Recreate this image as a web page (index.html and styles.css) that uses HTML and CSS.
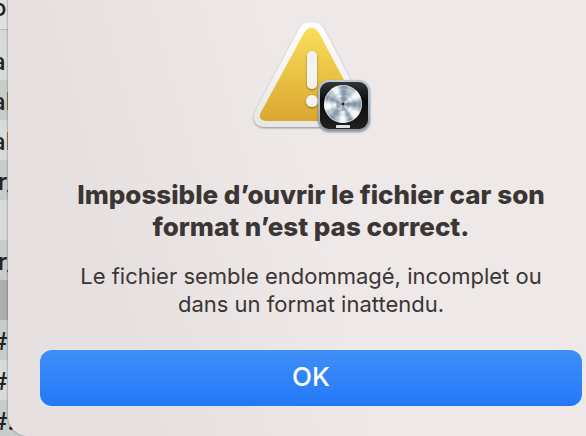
FILE: index.html
```html
<!DOCTYPE html>
<html lang="fr">
<head>
  <meta charset="UTF-8" />
  <meta name="viewport" content="width=device-width, initial-scale=1.0" />
  <title>Logic Pro</title>
  <link rel="stylesheet" href="styles.css">
</head>
<body>

  <!-- === LISTE DERRIÈRE === -->
  <div class="file-list" aria-hidden="true">
    <div class="list-header"><span>or</span></div>
    <ul>
      <li><span>a</span></li>
      <li><span>al</span></li>
      <li><span>al</span></li>
      <li class="short"><span>r_</span></li>
      <li></li>
      <li class="short"><span>r_</span></li>
      <li class="selected"></li>
      <li><span>#</span></li>
      <li><span>#</span></li>
      <li><span>#.</span></li>
    </ul>
  </div>

  <!-- === ALERTE === -->
  <div class="alert" role="alertdialog" aria-labelledby="alert-title" aria-describedby="alert-text">
    <svg class="alert-icon" viewBox="0 0 128 120" aria-hidden="true">
      <defs>
        <linearGradient id="yellow" x1="0" y1="0" x2="0" y2="1">
          <stop offset="0" stop-color="#f9df5b" />
          <stop offset="1" stop-color="#dba62f" />
        </linearGradient>
        <linearGradient id="white" x1="0" y1="0" x2="0" y2="1">
          <stop offset="0" stop-color="#ffffff" />
          <stop offset="1" stop-color="#e6e6e5" />
        </linearGradient>
        <linearGradient id="black" x1="0" y1="0" x2="0" y2="1">
          <stop offset="0" stop-color="#353535" />
          <stop offset="0.4" stop-color="#0c0c0c" />
          <stop offset="1" stop-color="#202020" />
        </linearGradient>
        <linearGradient id="rim" x1="0" y1="0" x2="0" y2="1">
          <stop offset="0" stop-color="#b9c9d8" />
          <stop offset="1" stop-color="#8e99a6" />
        </linearGradient>
        <filter id="shadow" x="-20%" y="-20%" width="140%" height="140%">
          <feDropShadow dx="0" dy="1" stdDeviation="1.2" flood-color="#000" flood-opacity="0.4" />
        </filter>
        <clipPath id="disc"><circle cx="96" cy="86" r="19" /></clipPath>
        <filter id="soft"><feGaussianBlur stdDeviation="0.8" /></filter>
      </defs>

      <path filter="url(#shadow)" fill="url(#white)" d="M52 11Q56 4 64.500 4Q73 4 77 11L120 94Q124 101 120 105Q117 109 110 109H19Q11 109 8 104Q5 99 9 92Z" />
      <path fill="url(#yellow)" d="M57 15Q60 10 64.500 10Q69 10 72 15L114 94Q116 98 114 101Q112 103 109 103H20Q15 103 13 100Q12 97 14 94Z" />
      <g filter="url(#shadow)" fill="#f3f3f2">
        <rect x="60" y="33" width="10" height="38" rx="5" />
        <circle cx="65" cy="83" r="6" />
      </g>

      <g filter="url(#shadow)">
        <rect x="71" y="62" width="52" height="51" rx="11" fill="url(#rim)" />
      </g>
      <rect x="73" y="64" width="48" height="47" rx="9" fill="url(#black)" />
      <g clip-path="url(#disc)">
        <circle cx="96" cy="86" r="19" fill="#b4c1cf" />
        <g filter="url(#soft)">
          <path fill="#f4f8fb" d="M96 86L79 65L89 63ZM96 86L74 84L75 94ZM96 86L113 69L119 78ZM96 86L117 96L109 104ZM96 86L91 107L100 107Z" />
          <path fill="#8495a8" d="M96 86L93 63L102 64ZM96 86L75 74L74 80ZM96 86L118 82L118 91ZM96 86L79 101L85 106ZM96 86L103 107L108 104Z" />
        </g>
        <circle cx="96" cy="86" r="15" fill="none" stroke="#fff" stroke-opacity="0.3" />
        <circle cx="96" cy="86" r="11" fill="none" stroke="#56697d" stroke-opacity="0.2" />
        <circle cx="96" cy="86" r="7" fill="#6f7d8b" fill-opacity="0.55" />
        <path fill="#d9e0e6" fill-opacity="0.7" d="M96 86L90 82L93 80ZM96 86L101 80L103 84ZM96 86L90 91L94 93ZM96 86L102 90L99 92Z" />
        <circle cx="96" cy="86" r="1.500" fill="#1d2733" />
      </g>
      <circle cx="96" cy="86" r="18.500" fill="none" stroke="#e2e9ef" stroke-opacity="0.6" />
      <rect x="89" y="107" width="14" height="3" rx="0.500" fill="#dfe3e6" />
    </svg>

    <h1 id="alert-title">Impossible d’ouvrir le fichier car son format n’est pas correct.</h1>
    <p id="alert-text">Le fichier semble endommagé, incomplet ou dans un format inattendu.</p>
    <button type="button">OK</button>
  </div>

</body>
</html>
```

FILE: styles.css
```css
* {
  margin: 0;
  padding: 0;
  box-sizing: border-box;
}

body, html {
  height: 100%;
  overflow: hidden;
  font-family: Inter, sans-serif;
}

body {
  background: #d6d8d7;
  color: #3b3534;
  position: relative;
}

/* === LISTE === */
.file-list {
  width: 100%;
  color: #222;
  font-size: 24px;
  font-weight: 500;
  line-height: 44px;
}

.file-list span {
  margin-left: -8px;
}

.file-list .short span {
  margin-left: -2px;
}

.list-header {
  height: 30px;
  line-height: 16px;
  background: #e0e0e0;
  border-bottom: 1px solid #bbb;
}

.file-list ul {
  list-style: none;
  padding-top: 10px;
}

.file-list li {
  height: 40px;
  background: #d9dbda;
}

.file-list li:nth-child(even) {
  background: #c8cccb;
}

.file-list .selected {
  background: #aeaeae;
}

/* === ALERTE === */
.alert {
  position: absolute;
  top: -20px;
  left: 8px;
  right: -28px;
  bottom: 0;
  padding: 38px 32px 30px;
  display: flex;
  flex-direction: column;
  align-items: center;
  text-align: center;
  background: linear-gradient(75deg, #e6e1e0 20%, #eee8e8 50%);
  border-radius: 20px;
  box-shadow: 0 0 2px rgba(0, 0, 0, 0.6);
}

.alert-icon {
  width: 128px;
  height: 120px;
  flex-shrink: 0;
}

.alert h1 {
  margin-top: 41px;
  font-size: 26px;
  line-height: 32px;
  font-weight: 800;
}

.alert p {
  margin-top: 19px;
  max-width: 500px;
  font-size: 22px;
  line-height: 28px;
}

.alert button {
  width: 100%;
  height: 56px;
  margin-top: 32px;
  padding-bottom: 4px;
  flex-shrink: 0;
  border: none;
  border-radius: 12px;
  background: linear-gradient(#408ff8, #2478f8);
  color: #fff;
  font-family: inherit;
  font-size: 26px;
  font-weight: 500;
  cursor: pointer;
}
```
